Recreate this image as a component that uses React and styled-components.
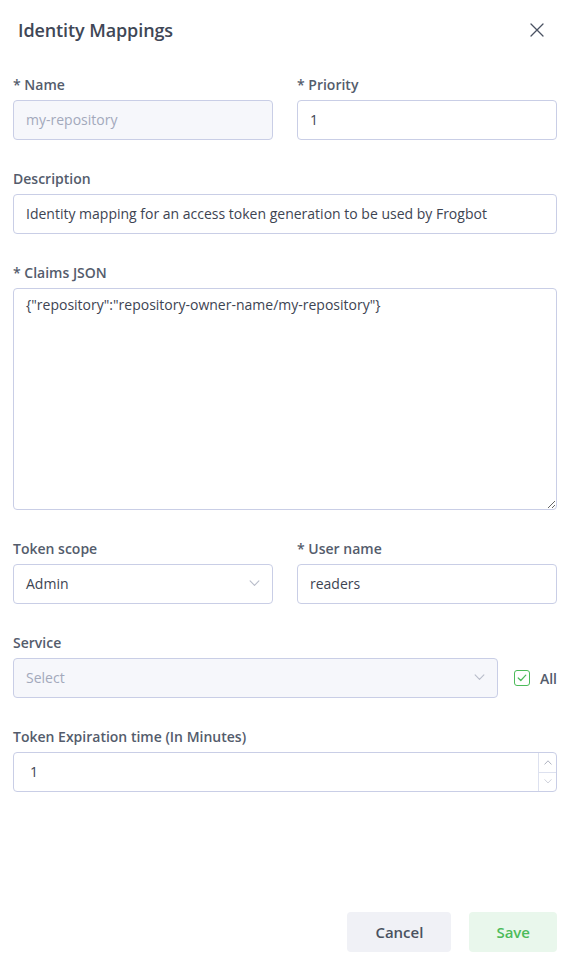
import React from "react";
import styled, { createGlobalStyle } from "styled-components";

const GlobalStyle = createGlobalStyle`
  html, body {
    margin: 0;
    padding: 0;
    background: #ffffff;
  }
  * {
    box-sizing: border-box;
  }
  body {
    font-family: "Open Sans", "Noto Sans", sans-serif;
    color: #3d4452;
  }
`;

const Modal = styled.div`
  width: 569px;
  height: 966px;
  display: flex;
  flex-direction: column;
  background: #fff;
`;

const Header = styled.div`
  height: 60px;
  display: flex;
  align-items: center;
  justify-content: space-between;
  padding: 0 25px 0 18px;
`;

const Title = styled.h2`
  margin: 0;
  font-size: 18px;
  font-weight: 600;
  color: #3f4756;
  letter-spacing: -0.1px;
`;

const CloseButton = styled.button`
  border: none;
  background: none;
  padding: 0;
  width: 14px;
  height: 14px;
  display: flex;
  cursor: pointer;
`;

const Body = styled.div`
  padding: 14px 12px 0 13px;
  display: flex;
  flex-direction: column;
  gap: 28px;
`;

const Row = styled.div`
  display: grid;
  grid-template-columns: ${(p) => p.$cols || "1fr"};
  gap: 24px;
  align-items: end;
`;

const Field = styled.div`
  display: flex;
  flex-direction: column;
  gap: 4px;
  min-width: 0;
`;

const Label = styled.label`
  font-size: 14px;
  line-height: 22px;
  font-weight: 600;
  color: #545c6c;
`;

const Box = styled.div`
  height: ${(p) => p.$height || 40}px;
  border: 1px solid #c9cee6;
  border-radius: 4px;
  background: ${(p) => (p.$disabled ? "#f6f7fb" : "#fff")};
  color: ${(p) => (p.$muted ? "#a3a9bb" : "#3d4452")};
  font-size: 14px;
  display: flex;
  align-items: center;
  padding: 0 12px 1px 12px;
  white-space: nowrap;
  overflow: hidden;
  position: relative;
`;

const BoxText = styled.span`
  flex: 1;
`;

const TextArea = styled.textarea`
  height: 222px;
  border: 1px solid #c9cee6;
  border-radius: 4px;
  font-family: "Open Sans", "Noto Sans", sans-serif;
  font-size: 14px;
  line-height: 22px;
  color: #3d4452;
  padding: 5px 12px;
  resize: vertical;
  outline: none;
`;

const InlineRow = styled.div`
  display: flex;
  align-items: center;
  gap: 16px;
`;

const CheckWrap = styled.div`
  display: flex;
  align-items: center;
  gap: 10px;
  font-size: 14px;
  font-weight: 600;
  color: #545c6c;
`;

const CheckBox = styled.span`
  width: 16px;
  height: 16px;
  border: 1.5px solid #4cbb5a;
  border-radius: 3px;
  display: flex;
  align-items: center;
  justify-content: center;
`;

const Spinner = styled.div`
  position: absolute;
  right: 0;
  top: 0;
  bottom: 0;
  width: 18px;
  border-left: 1px solid #dde1ef;
  display: flex;
  flex-direction: column;
`;

const SpinHalf = styled.div`
  flex: 1;
  display: flex;
  align-items: center;
  justify-content: center;
  border-top: ${(p) => (p.$bottom ? "1px solid #dde1ef" : "none")};
`;

const Footer = styled.div`
  margin-top: auto;
  display: flex;
  justify-content: flex-end;
  gap: 18px;
  padding: 0 12px 14px 0;
`;

const Button = styled.button`
  height: 40px;
  padding: 0 ${(p) => (p.$primary ? 27 : 28)}px;
  border: none;
  border-radius: 4px;
  font-family: "Open Sans", "Noto Sans", sans-serif;
  font-size: 15px;
  font-weight: 600;
  cursor: pointer;
  background: ${(p) => (p.$primary ? "#e9f7ec" : "#f0f1f6")};
  color: ${(p) => (p.$primary ? "#4cbb5a" : "#4a5160")};
`;

const Chevron = ({ up, color = "#b9bdca", size = 11 }) => (
  <svg width={size} height={size * 0.6} viewBox="0 0 10 6" fill="none">
    <path
      d={up ? "M1 5.2 L5 1 L9 5.2" : "M1 0.8 L5 5 L9 0.8"}
      stroke={color}
      strokeWidth="1"
      strokeLinecap="round"
      strokeLinejoin="round"
    />
  </svg>
);

const Select = ({ value, placeholder, disabled }) => (
  <Box $disabled={disabled} $muted={!value}>
    <BoxText>{value || placeholder}</BoxText>
    <Chevron />
  </Box>
);

export default function App() {
  return (
    <>
      <GlobalStyle />
      <Modal>
        <Header>
          <Title>Identity Mappings</Title>
          <CloseButton aria-label="close">
            <svg width="14" height="14" viewBox="0 0 14 14">
              <path
                d="M1 1 L13 13 M13 1 L1 13"
                stroke="#4a5262"
                strokeWidth="1.3"
                strokeLinecap="round"
              />
            </svg>
          </CloseButton>
        </Header>
        <Body>
          <Row $cols="1fr 1fr">
            <Field>
              <Label>* Name</Label>
              <Box $disabled $muted>
                my-repository
              </Box>
            </Field>
            <Field>
              <Label>* Priority</Label>
              <Box>1</Box>
            </Field>
          </Row>
          <Field>
            <Label>Description</Label>
            <Box>Identity mapping for an access token generation to be used by Frogbot</Box>
          </Field>
          <Field>
            <Label>* Claims JSON</Label>
            <TextArea
              readOnly
              defaultValue={'{"repository":"repository-owner-name/my-repository"}'}
            />
          </Field>
          <Row $cols="1fr 1fr">
            <Field>
              <Label>Token scope</Label>
              <Select value="Admin" />
            </Field>
            <Field>
              <Label>* User name</Label>
              <Box>readers</Box>
            </Field>
          </Row>
          <Field>
            <Label>Service</Label>
            <InlineRow>
              <div style={{ flex: 1 }}>
                <Select placeholder="Select" disabled />
              </div>
              <CheckWrap>
                <CheckBox>
                  <svg width="10" height="8" viewBox="0 0 10 8" fill="none">
                    <path
                      d="M1.2 4 L3.8 6.5 L8.8 1.2"
                      stroke="#4cbb5a"
                      strokeWidth="1.2"
                      strokeLinecap="round"
                      strokeLinejoin="round"
                    />
                  </svg>
                </CheckBox>
                All
              </CheckWrap>
            </InlineRow>
          </Field>
          <Field>
            <Label>Token Expiration time (In Minutes)</Label>
            <Box style={{ paddingLeft: 16 }}>
              <BoxText>1</BoxText>
              <Spinner>
                <SpinHalf>
                  <Chevron up size={8} color="#9aa0b0" />
                </SpinHalf>
                <SpinHalf $bottom>
                  <Chevron size={8} color="#c3c7d3" />
                </SpinHalf>
              </Spinner>
            </Box>
          </Field>
        </Body>
        <Footer>
          <Button>Cancel</Button>
          <Button $primary>Save</Button>
        </Footer>
      </Modal>
    </>
  );
}
